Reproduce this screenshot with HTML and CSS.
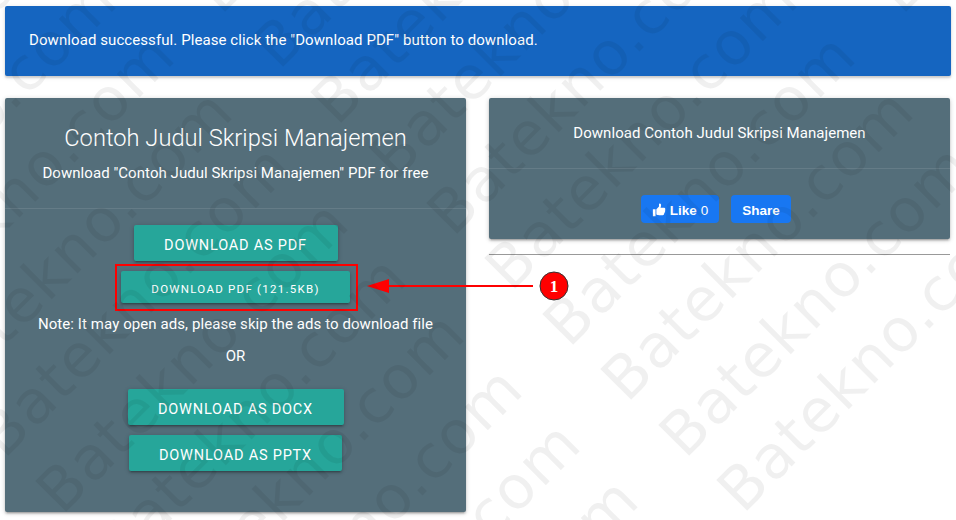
FILE: index.html
```html
<!DOCTYPE html>
<html lang="en">
<head>
<meta charset="utf-8">
<title>Download PDF</title>
<link rel="stylesheet" href="styles.css">
</head>
<body>
<div class="alert">Download successful. Please click the "Download PDF" button to download.</div>
<main class="columns">
  <section class="card card-main">
    <header class="card-head">
      <h1>Contoh Judul Skripsi Manajemen</h1>
      <p>Download "Contoh Judul Skripsi Manajemen" PDF for free</p>
    </header>
    <div class="card-body">
      <a class="btn btn-pdf">DOWNLOAD AS PDF</a>
      <a class="btn btn-small">DOWNLOAD PDF (121.5KB)</a>
      <p class="note">Note: It may open ads, please skip the ads to download file</p>
      <p class="or">OR</p>
      <a class="btn btn-docx">DOWNLOAD AS DOCX</a>
      <a class="btn btn-pptx">DOWNLOAD AS PPTX</a>
    </div>
  </section>
  <aside class="side">
    <section class="card">
      <header class="share-head">Download Contoh Judul Skripsi Manajemen</header>
      <div class="share-body">
        <a class="fb fb-like">
          <svg viewBox="0 0 16 16" width="14" height="14"><path fill="#fff" d="M1 7h3v8H1zM5 7.2 8 4V1.200c0-.7 1.900-.9 2.300.5.300 1.200-.2 2.500-.6 3.800H14c1 0 1.300 1 1 1.600.4.500.4 1.200-.1 1.700.3.600.2 1.200-.4 1.700.2.700-.1 1.300-.7 1.600.1 1.100-.5 1.900-1.600 1.900H8c-1.200 0-2-.6-3-.8z"/></svg>
          <b>Like</b> <span>0</span>
        </a>
        <a class="fb fb-share"><b>Share</b></a>
      </div>
    </section>
    <hr class="rule">
  </aside>
</main>
<div class="callout"></div>
<svg class="arrow" width="210" height="36" viewBox="0 0 210 36">
  <path d="M172 17H28" stroke="#f00" stroke-width="2" fill="none"/>
  <path d="M6 17 28 10V24Z" fill="#f00"/>
  <circle cx="193" cy="17" r="14" fill="#f00" stroke="#333" stroke-width="1"/>
  <text x="193" y="23" class="arrow-num">1</text>
</svg>
<svg class="marks" width="956" height="520" viewBox="0 0 956 520" aria-hidden="true">
  <text transform="translate(743 515) rotate(-45)">Batekno.com</text>
  <text transform="translate(685 460) rotate(-45)">Batekno.com</text>
  <text transform="translate(627 404) rotate(-45)">Batekno.com</text>
  <text transform="translate(569 349) rotate(-45)">Batekno.com</text>
  <text transform="translate(511 293) rotate(-45)">Batekno.com</text>
  <text transform="translate(453 238) rotate(-45)">Batekno.com</text>
  <text transform="translate(395 182) rotate(-45)">Batekno.com</text>
  <text transform="translate(337 127) rotate(-45)">Batekno.com</text>
  <text transform="translate(279 71) rotate(-45)">Batekno.com</text>
  <text transform="translate(221 16) rotate(-45)">Batekno.com</text>
  <text transform="translate(902 16) rotate(-45)">Batekno.com</text>
  <text transform="translate(410 848) rotate(-45)">Batekno.com</text>
  <text transform="translate(352 793) rotate(-45)">Batekno.com</text>
  <text transform="translate(294 737) rotate(-45)">Batekno.com</text>
  <text transform="translate(236 682) rotate(-45)">Batekno.com</text>
  <text transform="translate(178 627) rotate(-45)">Batekno.com</text>
  <text transform="translate(120 571) rotate(-45)">Batekno.com</text>
  <text transform="translate(62 516) rotate(-45)">Batekno.com</text>
  <text transform="translate(4 460) rotate(-45)">Batekno.com</text>
  <text transform="translate(-54 405) rotate(-45)">Batekno.com</text>
  <text transform="translate(-112 349) rotate(-45)">Batekno.com</text>
  <text transform="translate(-170 294) rotate(-45)">Batekno.com</text>
  <text transform="translate(-228 238) rotate(-45)">Batekno.com</text>
</svg>
</body>
</html>
```
FILE: styles.css
```css
html,body{margin:0;height:520px;overflow:hidden;background:#fff}
body{font-family:Roboto,"Liberation Sans",sans-serif;color:#fff;padding:6px 5px 0;box-sizing:border-box;position:relative}
.alert{background:#1565c0;height:70px;line-height:69px;padding-left:24px;font-size:15px;letter-spacing:.08px;border-radius:2px;box-shadow:0 2px 2px rgba(0,0,0,.14),0 1px 5px rgba(0,0,0,.12)}
.columns{display:flex;gap:23px;margin-top:22px;align-items:flex-start}
.card{width:461px;background:#546e7a;border-radius:2px;box-shadow:0 2px 2px rgba(0,0,0,.14),0 3px 1px -2px rgba(0,0,0,.12),0 1px 5px rgba(0,0,0,.2)}
.card-main{height:414px;text-align:center}
.card-head{height:110px;border-bottom:1px solid rgba(255,255,255,.1)}
h1{margin:0;padding-top:26px;font-size:23.7px;font-weight:300;line-height:28px}
.card-head p{margin:10px 0 0;font-size:15px;letter-spacing:.06px;line-height:22px}
.card-body{display:flex;flex-direction:column;align-items:center;padding-top:16px}
.btn{background:#26a69a;border-radius:2px;display:block;text-align:center;box-shadow:0 2px 2px rgba(0,0,0,.14),0 3px 1px -2px rgba(0,0,0,.12),0 1px 5px rgba(0,0,0,.2);font-size:14.5px;letter-spacing:.8px}
.btn-pdf{width:204px;height:36px;line-height:41px}
.btn-small{width:229px;height:32px;line-height:37px;font-size:11.5px;margin-top:10px;letter-spacing:1.26px}
.note{margin:10px 0 0;font-size:15px;letter-spacing:.08px;line-height:22px}
.or{margin:10px 0 0;font-size:15px;line-height:22px}
.btn-docx{width:216px;height:36px;line-height:42px;margin-top:22px}
.btn-pptx{width:213px;height:36px;line-height:42px;margin-top:10px}
.side{width:461px}
.share-head{height:70px;line-height:71px;text-align:center;font-size:15px;letter-spacing:.05px;border-bottom:1px solid rgba(255,255,255,.1)}
.share-body{height:70px;display:flex;justify-content:center;gap:12px;padding:26px 7px 0 0;box-sizing:border-box}
.fb{background:#1877f2;height:28px;padding-top:2px;box-sizing:border-box;border-radius:4px;display:flex;align-items:center;justify-content:center;gap:4px;font:13.5px "Liberation Sans",Arial,sans-serif}
.fb-like{width:78px}
.fb-share{width:60px}
.fb b{font-weight:700}
.rule{border:0;border-top:1px solid #999;margin:15px 0 0}
.callout{position:absolute;left:115px;top:264px;width:243px;height:47px;border:2px solid #f00;box-sizing:border-box}
.arrow{position:absolute;left:361px;top:269px}
.arrow-num{font:700 17px "Liberation Serif",serif;fill:#fff;text-anchor:middle}
.marks{position:absolute;left:0;top:0;pointer-events:none;font:400 60px "DejaVu Sans",sans-serif;letter-spacing:1.5px;fill:rgba(0,0,0,.06)}
```
